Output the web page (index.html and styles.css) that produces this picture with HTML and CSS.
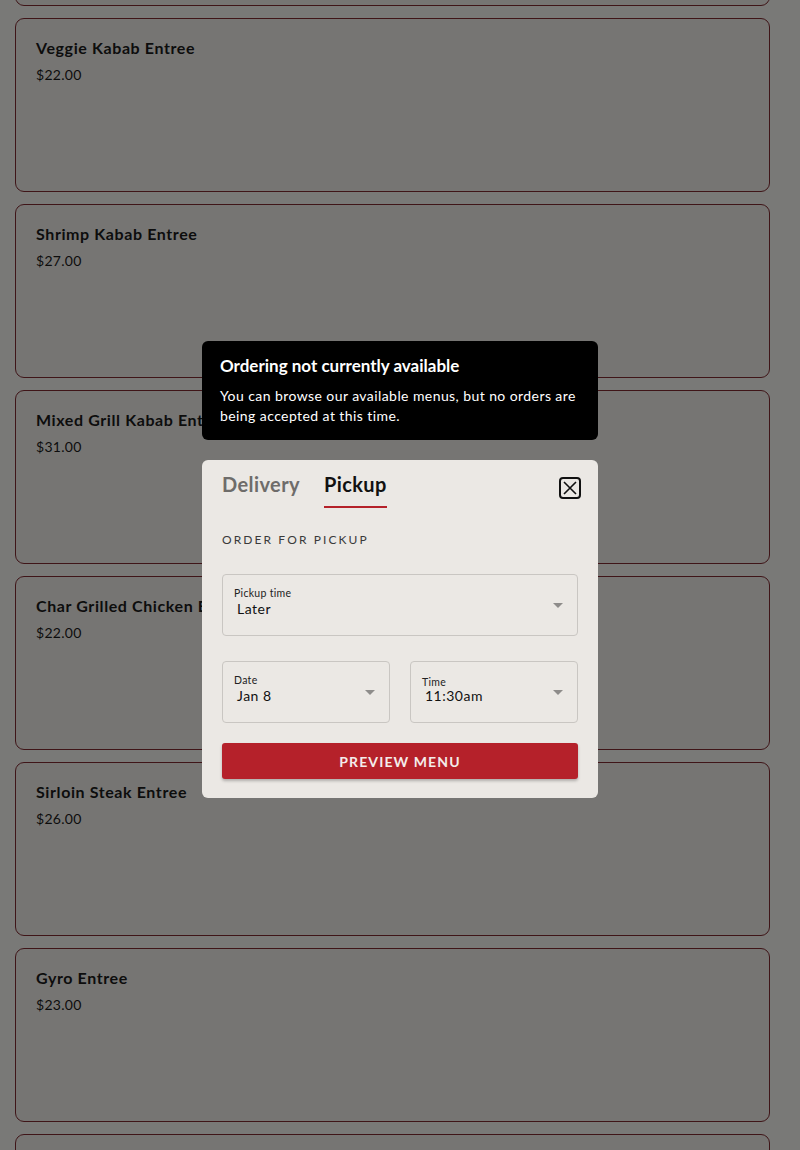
FILE: index.html
```html
<!DOCTYPE html>
<html>
<head>
<meta charset="utf-8">
<link rel="stylesheet" href="styles.css">
</head>
<body>
<main class="menu">
  <div class="card"></div>
  <div class="card"><div class="card-title">Veggie Kabab Entree</div><div class="card-price">$22.00</div></div>
  <div class="card"><div class="card-title">Shrimp Kabab Entree</div><div class="card-price">$27.00</div></div>
  <div class="card"><div class="card-title">Mixed Grill Kabab Entree</div><div class="card-price">$31.00</div></div>
  <div class="card"><div class="card-title">Char Grilled Chicken Entree</div><div class="card-price">$22.00</div></div>
  <div class="card"><div class="card-title">Sirloin Steak Entree</div><div class="card-price">$26.00</div></div>
  <div class="card"><div class="card-title">Gyro Entree</div><div class="card-price">$23.00</div></div>
  <div class="card"></div>
</main>
<div class="overlay">
  <div class="stack">
    <div class="toast">
      <div class="toast-title">Ordering not currently available</div>
      <div class="toast-body">You can browse our available menus, but no orders are being accepted at this time.</div>
    </div>
    <div class="modal">
      <div class="modal-head">
        <div class="tabs">
          <div class="tab">Delivery</div>
          <div class="tab active">Pickup</div>
        </div>
        <button class="close" aria-label="Close">
          <svg width="22" height="22" viewBox="0 0 22 22"><rect x="1" y="1" width="20" height="20" rx="3" fill="none" stroke="#111" stroke-width="2"/><path d="M5 5 L17 17 M17 5 L5 17" stroke="#111" stroke-width="1.6"/></svg>
        </button>
      </div>
      <div class="section-label">ORDER FOR PICKUP</div>
      <div class="field">
        <div class="field-label">Pickup time</div>
        <div class="field-value">Later</div>
        <span class="caret"></span>
      </div>
      <div class="row">
        <div class="field">
          <div class="field-label">Date</div>
          <div class="field-value">Jan 8</div>
          <span class="caret"></span>
        </div>
        <div class="field">
          <div class="field-label lower">Time</div>
          <div class="field-value">11:30am</div>
          <span class="caret"></span>
        </div>
      </div>
      <button class="primary">PREVIEW MENU</button>
    </div>
  </div>
</div>
</body>
</html>
```

FILE: styles.css
```css
* { box-sizing: border-box; }
html, body { margin: 0; padding: 0; }
body {
  background: #f3f2ef;
  font-family: "Lato", "Liberation Sans", sans-serif;
  overflow: hidden;
  height: 1150px;
}
.menu {
  display: flex;
  flex-direction: column;
  gap: 12px;
  padding: 0 30px 0 15px;
  margin-top: -168px;
}
.card {
  height: 174px;
  border: 1px solid #7e2a30;
  border-radius: 9px;
  background: #edebe7;
  padding: 18px 20px;
  flex-shrink: 0;
}
.card-title {
  font-size: 16px;
  font-weight: 700;
  color: #1a1a1a;
  letter-spacing: 0.6px;
  line-height: 22px;
}
.card-price {
  font-size: 14px;
  color: #1a1a1a;
  letter-spacing: 0.3px;
  margin-top: 6px;
  line-height: 20px;
}
.overlay {
  position: fixed;
  inset: 0;
  background: rgba(0, 0, 0, 0.5);
  display: flex;
  justify-content: center;
  padding-top: 341px;
}
.stack {
  width: 396px;
  display: flex;
  flex-direction: column;
  gap: 20px;
}
.toast {
  background: #000;
  color: #fff;
  border-radius: 6px;
  padding: 14px 18px 14px;
}
.toast-title {
  font-size: 17px;
  font-weight: 700;
  letter-spacing: 0;
  line-height: 22px;
}
.toast-body {
  font-size: 14px;
  letter-spacing: 0.42px;
  line-height: 20px;
  margin-top: 9px;
}
.modal {
  background: #ebe8e4;
  border-radius: 6px;
  padding: 10px 20px 19px;
}
.modal-head {
  display: flex;
  justify-content: space-between;
  align-items: flex-start;
}
.tabs {
  display: flex;
  gap: 24px;
}
.tab {
  font-size: 20px;
  font-weight: 700;
  color: #6e6c6a;
  letter-spacing: 0.4px;
  line-height: 28px;
  padding-bottom: 8px;
  border-bottom: 2px solid transparent;
}
.tab.active {
  color: #111;
  border-bottom-color: #b5212a;
}
.close {
  background: none;
  border: 0;
  padding: 0;
  margin-top: 7px;
  margin-right: -3px;
  width: 22px;
  height: 22px;
  display: block;
}
.close svg { display: block; }
.section-label {
  font-size: 12px;
  letter-spacing: 2.1px;
  color: #3a3a3a;
  margin-top: 24px;
  line-height: 16px;
}
.field {
  position: relative;
  border: 1px solid #c9c6c2;
  border-radius: 4px;
  height: 62px;
  padding: 12px 11px 0;
  margin-top: 26px;
}
.field-label {
  font-size: 10.5px;
  color: #222;
  letter-spacing: 0.3px;
  line-height: 12px;
}
.field-label.lower { padding-top: 2px; margin-bottom: -2px; }
.field-value {
  font-size: 14px;
  color: #111;
  letter-spacing: 0.5px;
  line-height: 17px;
  padding-top: 1px;
  padding-left: 3px;
}
.caret {
  position: absolute;
  right: 14px;
  top: 28px;
  width: 0;
  height: 0;
  border-left: 5px solid transparent;
  border-right: 5px solid transparent;
  border-top: 5px solid #8e8c8a;
}
.row {
  display: grid;
  grid-template-columns: 1fr 1fr;
  gap: 20px;
  margin-top: 25px;
}
.row .field { margin-top: 0; }
.primary {
  display: block;
  width: 100%;
  height: 36px;
  margin-top: 20px;
  border: 0;
  border-radius: 3px;
  background: #b5212a;
  color: #f4ecea;
  font-family: inherit;
  font-size: 14px;
  font-weight: 700;
  letter-spacing: 1.1px;
  box-shadow: 0 2px 3px rgba(0,0,0,0.25);
}
```
